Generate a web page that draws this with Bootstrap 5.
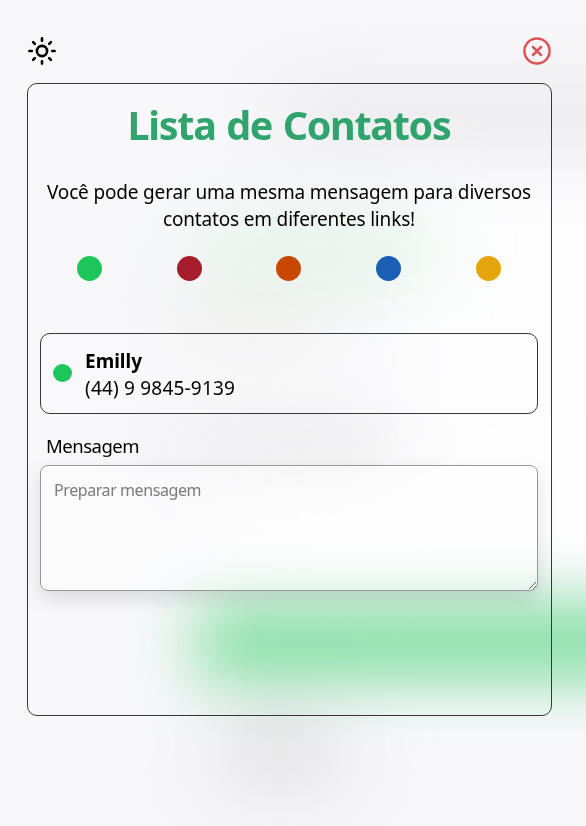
<!DOCTYPE html>
<html lang="pt-BR">
<head>
<meta charset="utf-8">
<meta name="viewport" content="width=device-width, initial-scale=1">
<title>Lista de Contatos</title>
<link href="https://cdn.jsdelivr.net/npm/bootstrap@5.3.0/dist/css/bootstrap.min.css" rel="stylesheet">
<style>
  body { background: #f8f8fb; color: #000; font-family: "Noto Sans", "Open Sans", sans-serif; font-size: 19px; line-height: 27px; }
  .backdrop-art { z-index: -1; }
  .page-shell { padding: 37px 34px 0 27px; }
  .top-icons { height: 28px; padding: 0 1px 0 1px; margin-bottom: 18px; }
  .panel { height: 633px; border: 1px solid #37373a; border-radius: 10px; padding: 0 13px 0 12px; }
  .panel-title { color: #30a46c; font-size: 39.5px; line-height: 56px; font-weight: 700; letter-spacing: -1.3px; word-spacing: 1.6px; margin: 13px 0 26px; }
  .intro { margin-bottom: 23px; white-space: nowrap; letter-spacing: -.17px; }
  .swatch { width: 25px; height: 25px; }
  .contact { height: 81px; border: 1px solid #37373a; border-radius: 10px; margin-top: 52px; padding: 2px 12px 0; gap: 13px; background: rgba(255,255,255,.22); }
  .contact-dot { width: 19px; height: 18px; margin-top: -4px; border-radius: 50%; }
  .contact-phone { letter-spacing: .2px; }
  .label-text { margin: 18px 0 6px 6px; font-size: 18.5px; letter-spacing: -.5px; }
  .message-box { height: 126px; border: 1px solid #98989b; border-radius: 8px; padding: 12px 12px 12px 13px; font-size: 16px; line-height: 24px; letter-spacing: -.42px; background: rgba(255,255,255,.4); box-shadow: 0 8px 20px rgba(0,0,0,.12); }
  .message-box:focus { background: rgba(255,255,255,.4); }
  .message-box::placeholder { color: #7b7b7d; opacity: 1; }
  .c-green { background: #1ec55a; }
  .c-red { background: #a51c2d; }
  .c-orange { background: #c84801; }
  .c-blue { background: #1b5fb5; }
  .c-yellow { background: #e5a50c; }
</style>
</head>
<body class="overflow-hidden vh-100">
<svg class="backdrop-art position-absolute top-0 start-0" width="586" height="826" viewBox="0 0 586 826" aria-hidden="true">
  <defs>
    <filter id="soft-wide" filterUnits="userSpaceOnUse" x="-200" y="-200" width="1200" height="1300" color-interpolation-filters="sRGB"><feGaussianBlur stdDeviation="42 34"/></filter>
    <filter id="soft-bar" filterUnits="userSpaceOnUse" x="-200" y="-200" width="1200" height="1300" color-interpolation-filters="sRGB"><feGaussianBlur stdDeviation="32 28"/></filter>
  </defs>
  <g filter="url(#soft-wide)">
    <rect x="400" y="190" width="400" height="370" fill="#fff" opacity=".75"/>
    <rect x="220" y="490" width="500" height="70" fill="#fff"/>
    <rect x="290" y="88" width="500" height="50" fill="#e2e2e5" opacity=".75"/>
    <rect x="205" y="222" width="225" height="60" fill="#dcf2e1" opacity=".8"/>
    <rect x="180" y="300" width="140" height="45" fill="#ece9e4" opacity=".7"/>
    <rect x="190" y="425" width="200" height="50" fill="#e6e6e5" opacity=".7"/>
    <rect x="225" y="690" width="110" height="110" fill="#dcdcdc" opacity=".7"/>
  </g>
  <rect x="198" y="600" width="600" height="84" fill="#8fe1ac" filter="url(#soft-bar)"/>
</svg>
<main class="page-shell">
  <div class="top-icons d-flex justify-content-between align-items-center">
    <svg width="28" height="28" viewBox="0 0 28 28" fill="none" stroke="#000" stroke-width="2.6" stroke-linecap="round" role="img" aria-label="Tema claro">
      <circle cx="14" cy="14" r="5.1"/>
      <path d="M14 1.4v2.4M14 24.2v2.4M1.4 14h2.4M24.2 14h2.4M5.1 5.1l1.7 1.7M21.2 21.2l1.7 1.7M5.1 22.9l1.7-1.7M21.2 6.8l1.7-1.7"/>
    </svg>
    <svg width="28" height="28" viewBox="0 0 28 28" fill="none" stroke="#dc5558" stroke-width="2.5" stroke-linecap="round" role="img" aria-label="Fechar">
      <circle cx="14" cy="14" r="12.6"/>
      <path d="M10 10l8 8M18 10l-8 8"/>
    </svg>
  </div>
  <section class="panel d-flex flex-column">
    <h1 class="panel-title text-center">Lista de Contatos</h1>
    <p class="intro text-center">Você pode gerar uma mesma mensagem para diversos<br>contatos em diferentes links!</p>
    <div class="d-flex justify-content-around">
      <span class="swatch rounded-circle c-green"></span>
      <span class="swatch rounded-circle c-red"></span>
      <span class="swatch rounded-circle c-orange"></span>
      <span class="swatch rounded-circle c-blue"></span>
      <span class="swatch rounded-circle c-yellow"></span>
    </div>
    <div class="contact d-flex align-items-center">
      <span class="contact-dot c-green flex-shrink-0"></span>
      <div>
        <div class="fw-bold">Emilly</div>
        <div class="contact-phone">(44) 9 9845-9139</div>
      </div>
    </div>
    <label class="label-text" for="msg">Mensagem</label>
    <textarea id="msg" class="message-box form-control" placeholder="Preparar mensagem"></textarea>
  </section>
</main>
<script src="https://cdn.jsdelivr.net/npm/bootstrap@5.3.0/dist/js/bootstrap.bundle.min.js"></script>
</body>
</html>
